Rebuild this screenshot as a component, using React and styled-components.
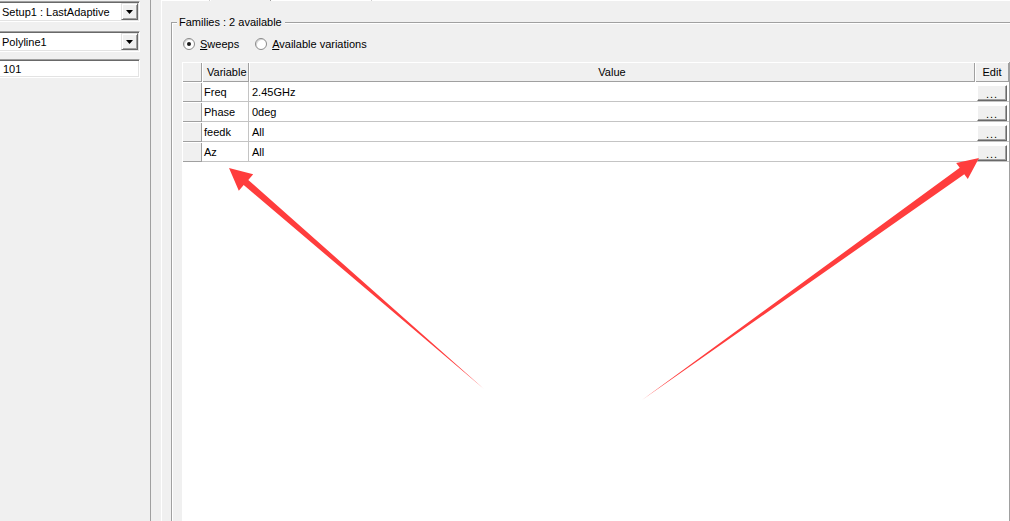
import { Fragment } from "react";
import styled, { createGlobalStyle } from "styled-components";

const GlobalStyle = createGlobalStyle`
  html, body {
    margin: 0;
    padding: 0;
    background: #f0f0f0;
  }
  body {
    font-family: "Liberation Sans", Arial, sans-serif;
    font-size: 11px;
    color: #000;
  }
  *, *::before, *::after {
    box-sizing: border-box;
  }
`;

const Screen = styled.div`
  position: relative;
  width: 1010px;
  height: 521px;
  overflow: hidden;
  display: flex;
  background: #f0f0f0;
`;

const Sidebar = styled.div`
  width: 151px;
  flex: none;
  border-right: 1px solid #a0a0a0;
  padding-top: 1px;
  display: flex;
  flex-direction: column;
`;

const Combo = styled.div`
  width: 142px;
  height: 21px;
  margin-left: -2px;
  margin-bottom: ${(p) => p.$gap}px;
  display: flex;
  align-items: center;
  background: #fff;
  border: 1px solid;
  border-color: #a0a0a0 #fff #fff #a0a0a0;
  box-shadow: inset 1px 1px 0 #696969, inset -1px -1px 0 #e3e3e3;
  padding-left: 3px;
`;

const ComboText = styled.span`
  flex: 1;
  white-space: nowrap;
`;

const DropButton = styled.div`
  width: 17px;
  height: 17px;
  flex: none;
  margin-right: 1px;
  display: flex;
  align-items: center;
  justify-content: center;
  background: #f0f0f0;
  border: 1px solid;
  border-color: #e3e3e3 #696969 #696969 #e3e3e3;
  box-shadow: inset 1px 1px 0 #fff, inset -1px -1px 0 #a0a0a0;
`;

const TextBox = styled.div`
  width: 142px;
  height: 19px;
  margin-left: -2px;
  display: flex;
  align-items: center;
  padding-left: 4px;
  background: #fff;
  border: 1px solid;
  border-color: #a0a0a0 #fff #fff #a0a0a0;
  box-shadow: inset 1px 1px 0 #696969, inset -1px -1px 0 #e3e3e3;
`;

const Main = styled.div`
  flex: 1;
  padding-left: 10px;
  display: flex;
`;

const TabControl = styled.div`
  flex: 1;
  margin-right: -30px;
  display: flex;
  flex-direction: column;
`;

const TabStrip = styled.div`
  height: 5px;
  display: flex;
`;

const Tab = styled.div`
  width: ${(p) => p.$w}px;
  flex: none;
  border-left: 1px solid #fff;
  border-right: 1px solid #a0a0a0;
  border-bottom: ${(p) => (p.$active ? "none" : "1px solid #fff")};
`;

const TabFill = styled.div`
  flex: 1;
  border-bottom: 1px solid #fff;
`;

const TabPage = styled.div`
  flex: 1;
  border-left: 1px solid #fff;
  padding: 15px 0 0 9px;
  display: flex;
`;

const GroupBox = styled.fieldset`
  flex: 1;
  margin: 0;
  padding: 8px 10px 0 10px;
  border: 1px solid #a0a0a0;
  box-shadow: inset 1px 1px 0 #fff;
  min-width: 0;
`;

const Legend = styled.legend`
  margin-left: -5px;
  padding: 0 3px 0 2px;
  line-height: 13px;
  background: #f0f0f0;
`;

const RadioRow = styled.div`
  height: 13px;
  display: flex;
  align-items: center;
  gap: 16px;
  padding-left: 1px;
`;

const RadioOption = styled.label`
  display: flex;
  align-items: center;
  gap: 5px;
  white-space: nowrap;
`;

const RadioCircle = styled.span`
  width: 12px;
  height: 12px;
  flex: none;
  border-radius: 50%;
  background: #fff;
  border: 1px solid #8a8a8a;
  box-shadow: inset 1px 1px 0 #d8d8d8;
  display: flex;
  align-items: center;
  justify-content: center;

  &::after {
    content: "";
    width: 4px;
    height: 4px;
    border-radius: 50%;
    background: ${(p) => (p.$checked ? "#1a1a1a" : "transparent")};
  }
`;

const Grid = styled.div`
  width: 828px;
  height: 470px;
  margin-top: 12px;
  display: grid;
  grid-template-columns: 20px 47px 1fr 34px;
  grid-auto-rows: 20px;
  align-content: start;
  background: #fff;
  border-right: 1px solid #a0a0a0;
`;

const HeadCell = styled.div`
  display: flex;
  align-items: center;
  justify-content: ${(p) => (p.$center ? "center" : "flex-start")};
  padding-left: ${(p) => (p.$center ? 0 : 5)}px;
  background: #f0f0f0;
  box-shadow: inset 1px 1px 0 #fff, inset -1px -1px 0 #a0a0a0;
  white-space: nowrap;
`;

const Cell = styled.div`
  display: flex;
  align-items: center;
  padding-left: ${(p) => p.$pad}px;
  border-bottom: 1px solid #c4c4c4;
  border-right: ${(p) => (p.$line ? "1px solid #c4c4c4" : "none")};
  white-space: nowrap;
  overflow: hidden;
`;

const EditCell = styled.div`
  display: flex;
  align-items: flex-start;
  padding: 3px 0 0 2px;
  border-bottom: 1px solid #c4c4c4;
`;

const EllipsisButton = styled.div`
  width: 30px;
  height: 16px;
  display: flex;
  align-items: center;
  justify-content: center;
  padding-top: 1px;
  background: #f0f0f0;
  border: 1px solid;
  border-color: #fff #696969 #696969 #fff;
  box-shadow: inset -1px -1px 0 #a0a0a0;
  font-size: 11px;
  letter-spacing: 1px;
`;

const Overlay = styled.svg`
  position: absolute;
  left: 0;
  top: 0;
  pointer-events: none;
`;

const rows = [
  { name: "Freq", value: "2.45GHz" },
  { name: "Phase", value: "0deg" },
  { name: "feedk", value: "All" },
  { name: "Az", value: "All" },
];

const DownArrow = () => (
  <svg width="7" height="4" viewBox="0 0 7 4">
    <polygon points="0,0 7,0 3.5,4" fill="#000" />
  </svg>
);

const App = () => {
  return (
    <Screen>
      <GlobalStyle />
      <Sidebar>
        <Combo $gap={9}>
          <ComboText>Setup1 : LastAdaptive</ComboText>
          <DropButton>
            <DownArrow />
          </DropButton>
        </Combo>
        <Combo $gap={7}>
          <ComboText>Polyline1</ComboText>
          <DropButton>
            <DownArrow />
          </DropButton>
        </Combo>
        <TextBox>101</TextBox>
      </Sidebar>

      <Main>
        <TabControl>
          <TabStrip>
            <Tab $w={49} />
            <Tab $w={61} $active />
            <Tab $w={101} />
            <TabFill />
          </TabStrip>
          <TabPage>
            <GroupBox>
              <Legend>Families : 2 available</Legend>
              <RadioRow>
                <RadioOption>
                  <RadioCircle $checked />
                  <span>
                    <u>S</u>weeps
                  </span>
                </RadioOption>
                <RadioOption>
                  <RadioCircle />
                  <span>
                    <u>A</u>vailable variations
                  </span>
                </RadioOption>
              </RadioRow>

              <Grid>
                <HeadCell />
                <HeadCell>Variable</HeadCell>
                <HeadCell $center>Value</HeadCell>
                <HeadCell $center>Edit</HeadCell>
                {rows.map((r) => (
                  <Fragment key={r.name}>
                    <HeadCell />
                    <Cell $pad={2} $line>
                      {r.name}
                    </Cell>
                    <Cell $pad={3}>{r.value}</Cell>
                    <EditCell>
                      <EllipsisButton>...</EllipsisButton>
                    </EditCell>
                  </Fragment>
                ))}
              </Grid>
            </GroupBox>
          </TabPage>
        </TabControl>
      </Main>

      <Overlay width="1010" height="521" viewBox="0 0 1010 521">
        <polygon
          points="484,389 248.3,179.9 253.2,174.2 229,168 238.8,190.8 243.7,185.1"
          fill="#ff3d3d"
        />
        <polygon
          points="642,400 964.3,174.2 967.8,179.1 979,158 956.2,162.9 959.7,167.8"
          fill="#ff3d3d"
        />
      </Overlay>
    </Screen>
  );
};

export default App;
